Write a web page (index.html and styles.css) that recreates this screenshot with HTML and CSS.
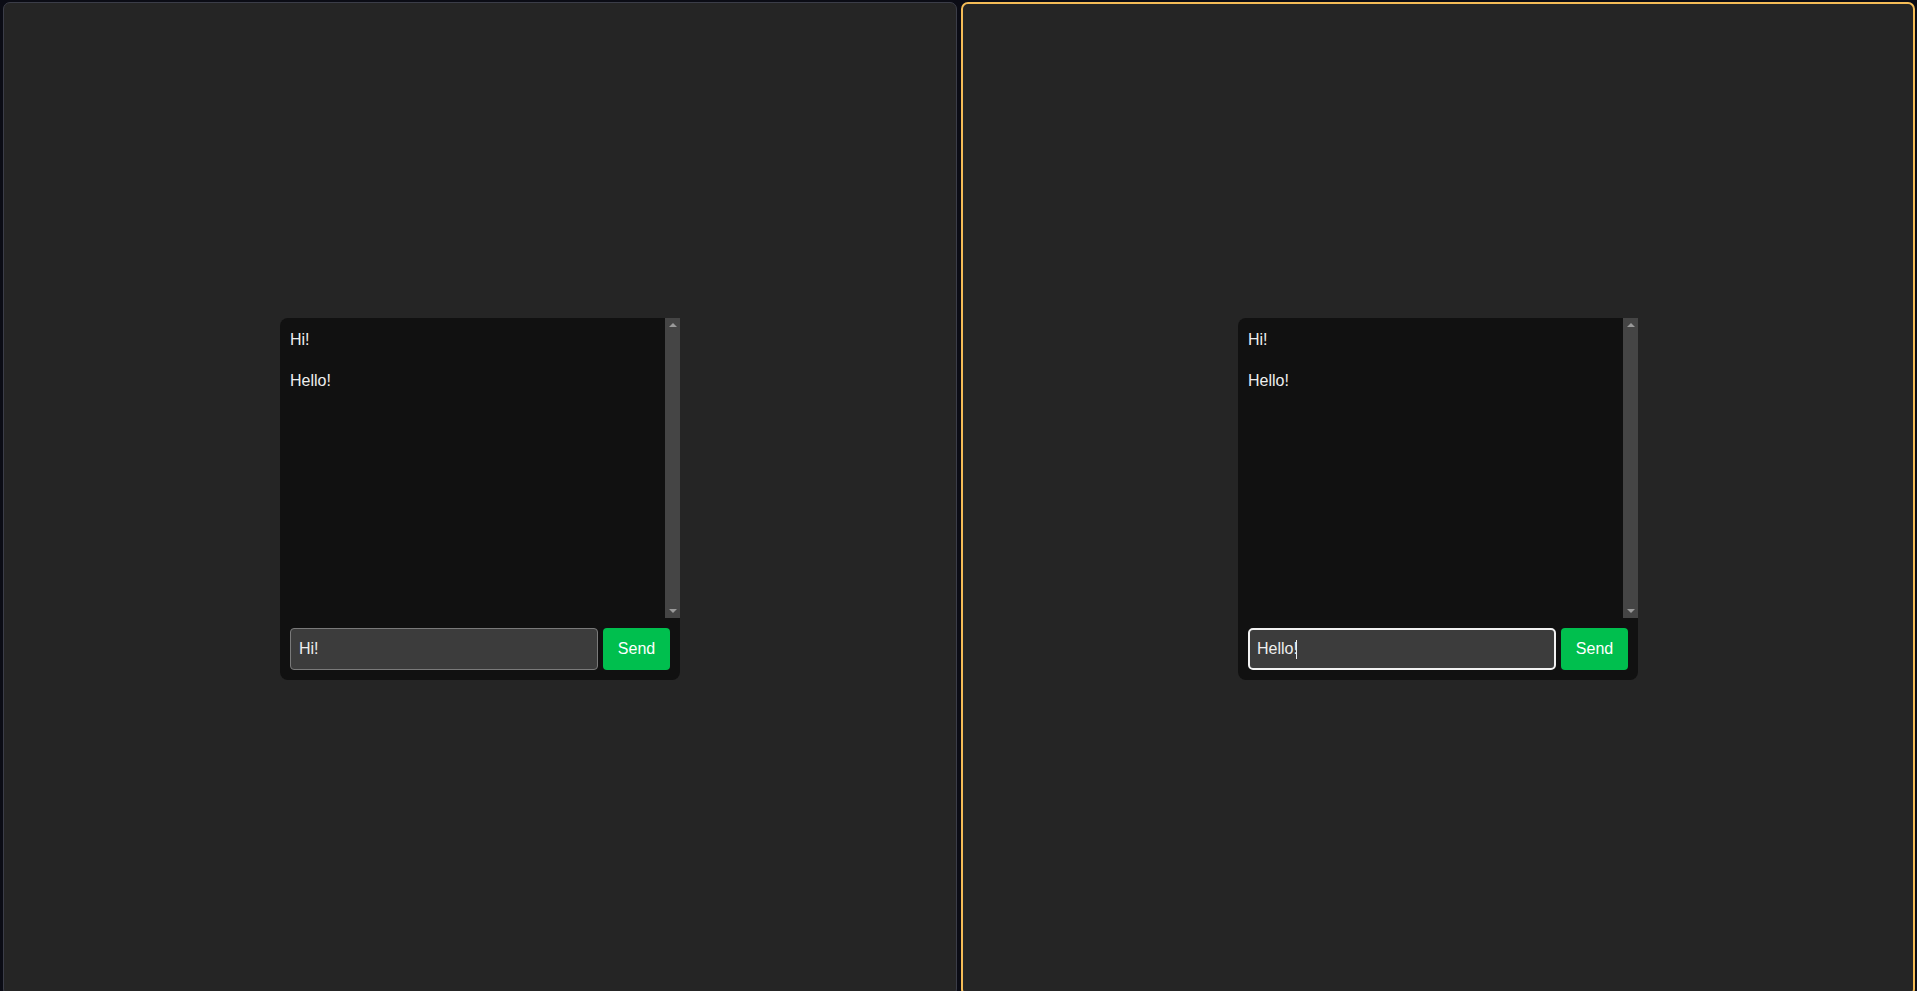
FILE: index.html
```html
<!DOCTYPE html>
<html lang="en">
<head>
<meta charset="utf-8">
<title>Chat</title>
<link rel="stylesheet" href="styles.css">
</head>
<body>
<div class="panes">
  <section class="pane">
    <div class="chat">
      <div class="messages">
        <div class="log">
          <div class="msg">Hi!</div>
          <div class="msg">Hello!</div>
        </div>
        <div class="scrollbar">
          <span class="arrow arrow-up"></span>
          <span class="arrow arrow-down"></span>
        </div>
      </div>
      <div class="composer">
        <input class="field" type="text" value="Hi!">
        <button class="send">Send</button>
      </div>
    </div>
  </section>
  <section class="pane pane-active">
    <div class="chat">
      <div class="messages">
        <div class="log">
          <div class="msg">Hi!</div>
          <div class="msg">Hello!</div>
        </div>
        <div class="scrollbar">
          <span class="arrow arrow-up"></span>
          <span class="arrow arrow-down"></span>
        </div>
      </div>
      <div class="composer">
        <div class="field field-focus">Hello!<span class="caret"></span></div>
        <button class="send">Send</button>
      </div>
    </div>
  </section>
</div>
</body>
</html>
```

FILE: styles.css
```css
html, body {
  margin: 0;
  height: 100%;
  overflow: hidden;
  background: #0b0c15;
}
body {
  font-family: "Liberation Sans", Arial, sans-serif;
  font-size: 16px;
  color: #eeeeee;
}
.panes {
  display: flex;
  gap: 4px;
  padding: 2px 2px 0 3px;
}
.pane {
  box-sizing: border-box;
  width: 954px;
  height: 994px;
  flex: none;
  background: #252525;
  border: 1px solid #3b3d48;
  border-radius: 7px;
  display: flex;
  align-items: center;
  justify-content: center;
}
.pane-active {
  border: 2px solid #f4bc57;
}
.chat {
  width: 400px;
  background: #111111;
  border-radius: 8px;
}
.messages {
  height: 300px;
  display: flex;
}
.log {
  flex: 1;
  padding: 13px 10px 10px;
}
.msg {
  line-height: 18px;
  margin-bottom: 23px;
}
.scrollbar {
  width: 15px;
  flex: none;
  background: #454545;
  display: flex;
  flex-direction: column;
  justify-content: space-between;
  align-items: center;
}
.arrow {
  width: 0;
  height: 0;
  border-left: 4px solid transparent;
  border-right: 4px solid transparent;
}
.arrow-up {
  margin-top: 5px;
  border-bottom: 4px solid #9a9a9a;
}
.arrow-down {
  margin-bottom: 5px;
  border-top: 4px solid #9a9a9a;
}
.composer {
  display: flex;
  gap: 5px;
  padding: 10px;
}
.field {
  box-sizing: border-box;
  flex: 1;
  height: 42px;
  margin: 0;
  padding: 0 8px;
  background: #3c3c3c;
  border: 1px solid #7a7a7a;
  border-radius: 4px;
  color: #eeeeee;
  font: inherit;
  font-size: 16px;
  outline: none;
}
.field-focus {
  display: flex;
  align-items: center;
  border: 2px solid #f2f2f2;
  border-radius: 5px;
  padding: 0 7px;
}
.caret {
  display: inline-block;
  width: 1px;
  height: 19px;
  background: #eeeeee;
  margin-left: -2px;
}
.send {
  box-sizing: border-box;
  width: 67px;
  height: 42px;
  margin: 0;
  padding: 0;
  border: none;
  border-radius: 4px;
  background: #00bf4e;
  color: #ffffff;
  font: inherit;
  font-size: 16px;
}
```
